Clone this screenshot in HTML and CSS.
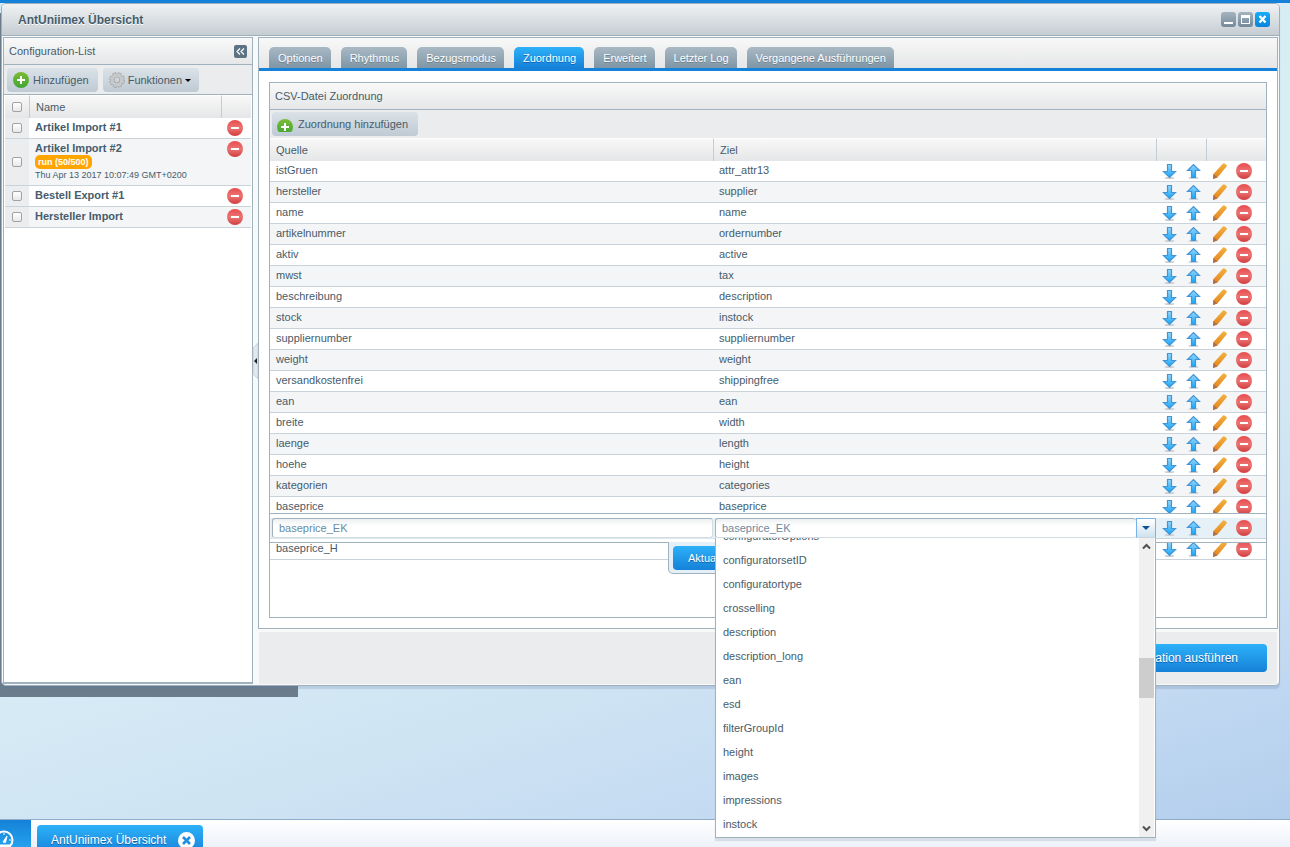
FILE: index.html
```html
<!DOCTYPE html>
<html lang="de">
<head>
<meta charset="utf-8">
<title>AntUniimex Übersicht</title>
<link rel="stylesheet" href="styles.css">
</head>
<body>
<svg class="defs" aria-hidden="true">
  <defs>
    <linearGradient id="gRed" x1="0" y1="0" x2="0" y2="1"><stop offset="0" stop-color="#ea4a4d"/><stop offset=".5" stop-color="#ea7573"/><stop offset="1" stop-color="#d23c3f"/></linearGradient>
    <linearGradient id="gGreen" x1="0" y1="0" x2="0" y2="1"><stop offset="0" stop-color="#7dbb35"/><stop offset="1" stop-color="#3fa535"/></linearGradient>
    <linearGradient id="gBlue" x1="0" y1="0" x2="0" y2="1"><stop offset="0" stop-color="#9ad6f8"/><stop offset="1" stop-color="#12a6fb"/></linearGradient>
    <linearGradient id="gPen" x1="0" y1="0" x2="0" y2="1"><stop offset="0" stop-color="#f2b340"/><stop offset="1" stop-color="#e3821f"/></linearGradient>
    <symbol id="minus" viewBox="0 0 16 16"><circle cx="8" cy="8" r="8" fill="url(#gRed)"/><rect x="4" y="7" width="8" height="2" fill="#fff"/></symbol>
    <symbol id="plus" viewBox="0 0 16 16"><circle cx="8" cy="8" r="8" fill="url(#gGreen)"/><path d="M7 4h2v3h3v2H9v3H7V9H4V7h3z" fill="#fff"/></symbol>
    <symbol id="down" viewBox="0 0 16 16"><ellipse cx="8.500" cy="15" rx="5" ry="1" fill="#c9ced3"/><path d="M6.500 1.500h4v7h4L8.500 14.500 2.500 8.500h4z" fill="url(#gBlue)" stroke="#4395d6" stroke-width="1.200"/></symbol>
    <symbol id="up" viewBox="0 0 16 16"><ellipse cx="8.500" cy="15" rx="5" ry="1" fill="#c9ced3"/><path d="M6.500 14.500h4v-7h4L8.500 1.500 2.500 7.500h4z" fill="url(#gBlue)" stroke="#4395d6" stroke-width="1.200"/></symbol>
    <symbol id="pen" viewBox="0 0 16 16"><path d="M1 16l.4-5L10.800.7q1-1 2.200 0l1.400 1.200q.9.900 0 1.900L5.400 14.400z" fill="url(#gPen)"/><path d="M1 16l.4-5 4 3.400z" fill="#a8704f"/></symbol>
    <symbol id="gear" viewBox="0 0 16 16"><g fill="none"><circle cx="8" cy="8" r="6.400" stroke="#a2a4a6" stroke-width="3" stroke-dasharray="3.400 1.626"/><circle cx="8" cy="8" r="4.600" stroke="#a2a4a6" stroke-width="4.400"/><circle cx="8" cy="8" r="6.200" stroke="#cbccce" stroke-width="2" stroke-dasharray="2.400 2.470" stroke-dashoffset="-.5"/><circle cx="8" cy="8" r="4.700" stroke="#c6c8ca" stroke-width="3.200"/></g></symbol>
  </defs>
</svg>
<div class="desktop">
  <div class="backwindow"></div>
  <section class="window">
    <header class="titlebar">
      <h1>AntUniimex Übersicht</h1>
      <div class="tools">
        <button class="tool" aria-label="Minimieren"><svg viewBox="0 0 15 15"><path d="M3 10h9v2H3z" fill="#fff"/></svg></button>
        <button class="tool" aria-label="Maximieren"><svg viewBox="0 0 15 15"><path d="M3 3h9v9H3zM4 6v5h7V6z" fill="#fff" fill-rule="evenodd"/></svg></button>
        <button class="tool close" aria-label="Schließen"><svg viewBox="0 0 15 15"><path d="M4.500 4l6 6.500M10.500 4l-6 6.500" stroke="#fff" stroke-width="2.400"/></svg></button>
      </div>
    </header>
    <div class="content">
      <aside class="sidebar">
        <div class="panelhead"><span>Configuration-List</span>
          <button class="collapse" aria-label="Einklappen"><svg viewBox="0 0 13 13"><path d="M6 3.500l-3 3 3 3M10 3.500l-3 3 3 3" fill="none" stroke="#fff" stroke-width="1.200"/></svg></button></div>
        <div class="toolbar">
          <button class="btn"><svg class="ic"><use href="#plus"/></svg>Hinzufügen</button>
          <button class="btn menu"><svg class="ic"><use href="#gear"/></svg>Funktionen<i class="caret"></i></button>
        </div>
        <table class="configs">
          <colgroup><col class="ccheck"><col><col class="cdel"></colgroup>
          <thead><tr><th><input type="checkbox" aria-label="Alle auswählen"></th><th>Name</th><th></th></tr></thead>
          <tbody>
            <tr><td><input type="checkbox" aria-label="Artikel Import #1"></td><td><b>Artikel Import #1</b></td><td><button class="icon" aria-label="Löschen"><svg class="ic"><use href="#minus"/></svg></button></td></tr>
            <tr><td><input type="checkbox" aria-label="Artikel Import #2"></td><td><b>Artikel Import #2</b><span class="badge">run (50/500)</span><small>Thu Apr 13 2017 10:07:49 GMT+0200</small></td><td><button class="icon" aria-label="Löschen"><svg class="ic"><use href="#minus"/></svg></button></td></tr>
            <tr><td><input type="checkbox" aria-label="Bestell Export #1"></td><td><b>Bestell Export #1</b></td><td><button class="icon" aria-label="Löschen"><svg class="ic"><use href="#minus"/></svg></button></td></tr>
            <tr><td><input type="checkbox" aria-label="Hersteller Import"></td><td><b>Hersteller Import</b></td><td><button class="icon" aria-label="Löschen"><svg class="ic"><use href="#minus"/></svg></button></td></tr>
          </tbody>
        </table>
      </aside>
      <div class="splitter"><svg viewBox="0 0 5 36"><path d="M5 0L0 5v26l5 5z" fill="#e4e6e8" stroke="#b9c3ca" stroke-width=".6"/><path d="M4 15v6L1 18z" fill="#222"/></svg></div>
      <main class="main">
        <div class="tabpanel">
          <nav class="tabs">
            <button>Optionen</button><button>Rhythmus</button><button>Bezugsmodus</button><button class="active">Zuordnung</button><button>Erweitert</button><button>Letzter Log</button><button>Vergangene Ausführungen</button>
          </nav>
          <div class="tabbody">
            <section class="gridpanel">
              <div class="panelhead"><span>CSV-Datei Zuordnung</span></div>
              <div class="toolbar"><button class="btn low"><svg class="ic" viewBox="0 0 16 13"><use href="#plus" width="16" height="16"/></svg>Zuordnung hinzufügen</button></div>
              <table class="mapping">
                <colgroup><col><col><col class="cmove"><col class="cedit"></colgroup>
                <thead><tr><th>Quelle</th><th>Ziel</th><th></th><th></th></tr></thead>
                <tbody id="rows"></tbody>
              </table>
            </section>
          </div>
        </div>
        <footer class="actions"><button class="primary big">Konfiguration ausführen</button></footer>
      </main>
    </div>
  </section>
  <div class="taskbar">
    <button class="start" aria-label="Dashboard"><svg viewBox="0 0 20 20"><circle cx="10" cy="10" r="8.500" fill="none" stroke="#fff" stroke-width="2"/><path d="M9 12l4-6-1.500 6.500z" fill="#fff" stroke="#fff"/><path d="M3 10h2M15 10h2M10 3v2M5 5l1 1M4 15h12v3H4z" stroke="#fff" fill="#fff"/></svg></button>
    <button class="task">AntUniimex Übersicht<svg viewBox="0 0 17 17"><circle cx="8.500" cy="8.500" r="8.500" fill="#fff"/><path d="M5 5l7 7M12 5l-7 7" stroke="#1e8fe3" stroke-width="2.600"/></svg></button>
  </div>
</div>
<script src="app.js"></script>
</body>
</html>
```

FILE: app.js
```js
const mapping = [
  ['istGruen', 'attr_attr13'], ['hersteller', 'supplier'], ['name', 'name'],
  ['artikelnummer', 'ordernumber'], ['aktiv', 'active'], ['mwst', 'tax'],
  ['beschreibung', 'description'], ['stock', 'instock'], ['suppliernumber', 'suppliernumber'],
  ['weight', 'weight'], ['versandkostenfrei', 'shippingfree'], ['ean', 'ean'],
  ['breite', 'width'], ['laenge', 'length'], ['hoehe', 'height'],
  ['kategorien', 'categories'], ['baseprice', 'baseprice'],
  ['baseprice_EK', 'baseprice_EK', true], ['baseprice_H', '']
];
const options = ['configuratorOptions', 'configuratorsetID', 'configuratortype', 'crosselling',
  'description', 'description_long', 'ean', 'esd', 'filterGroupId', 'height', 'images',
  'impressions', 'instock'];

const icon = (id, label) =>
  `<button class="icon" aria-label="${label}"><svg class="ic"><use href="#${id}"/></svg></button>`;

const dropdown = `<div class="dropdown">
  <ul role="listbox">${options.map(o => `<li role="option">${o}</li>`).join('')}</ul>
  <div class="scroll">
    <svg viewBox="0 0 15 17"><path d="M4 10.500l3.500-3.500 3.500 3.500" fill="none" stroke="#505050" stroke-width="2"/></svg>
    <i class="thumb"></i>
    <svg viewBox="0 0 15 17"><path d="M4 6.500l3.500 3.500 3.500-3.500" fill="none" stroke="#505050" stroke-width="2"/></svg>
  </div></div>`;

document.getElementById('rows').innerHTML = mapping.map(([source, target, editing]) => {
  const first = editing
    ? `<div class="frame"></div><div class="update"><button class="primary">Aktualisieren</button></div>
       <input class="field" type="text" aria-label="Quelle" value="${source}">`
    : source;
  const second = editing
    ? `<div class="combo"><input class="field" type="text" aria-label="Ziel" value="${target}"><button class="trigger" aria-label="Auswahl öffnen"><i class="caret"></i></button>${dropdown}</div>`
    : target;
  return `<tr${editing ? ' class="editing"' : ''}><td>${first}</td><td>${second}</td>
    <td><div class="icons">${icon('down', 'Nach unten')}${icon('up', 'Nach oben')}</div></td>
    <td><div class="icons">${icon('pen', 'Bearbeiten')}${icon('minus', 'Löschen')}</div></td></tr>`;
}).join('');
```

FILE: styles.css
```css
* { box-sizing: border-box; }
body {
  margin: 0;
  font: 11px/14px "Liberation Sans", Arial, sans-serif;
  color: #475c6a;
}
button, input { font: inherit; color: inherit; margin: 0; padding: 0; border: 0; }
button { background: none; white-space: nowrap; }
svg { display: block; }
.defs { position: absolute; width: 0; height: 0; }
.ic { width: 16px; height: 16px; flex: none; }

.desktop {
  position: relative;
  height: 100vh;
  overflow: hidden;
  display: flex;
  flex-direction: column;
  justify-content: flex-end;
  border-top: 3px solid #1581d8;
  background: linear-gradient(163deg, #d3ecf4 0%, #d8eef5 50%, #d0e5f3 68%, #c5dbf2 82%, #b0ccec 100%);
}
.backwindow {
  position: absolute;
  left: 0;
  top: 10px;
  bottom: 150px;
  width: 298px;
  background: #6b7d8c;
}

/* Window */
.window {
  position: absolute;
  z-index: 2;
  inset: 0 10px 161px 1px;
  display: flex;
  flex-direction: column;
  border: 1px solid #9fb0bc;
  border-radius: 5px;
  background: #f8fafa;
  box-shadow: 0 3px 1px rgba(90, 120, 160, .22);
}
.titlebar {
  flex: none;
  height: 32px;
  display: flex;
  align-items: center;
  justify-content: space-between;
  padding: 0 9px 0 16px;
  border-bottom: 1px solid #9fb0bc;
  border-radius: 4px 4px 0 0;
  background: linear-gradient(#f0f2f3, #c5cdd3);
}
.titlebar h1 { margin: 0; font-size: 12px; text-shadow: 0 1px #fff; }
.tools { display: flex; gap: 2px; }
.tool { width: 15px; height: 15px; border-radius: 3px; background: linear-gradient(#a5b4bf, #75899a); }
.tool.close { background: linear-gradient(#16adfb, #0883dc); }
.content { flex: 1; min-height: 0; display: flex; padding: 1px; }

/* Shared panel parts */
.panelhead {
  display: flex;
  align-items: center;
  justify-content: space-between;
  height: 27px;
  padding: 0 5px;
  border-bottom: 1px solid #9fb2be;
  background: linear-gradient(#f9f9f9, #e5e7e8);
}
.collapse { width: 13px; height: 13px; border-radius: 2px; background: #5d7382; }
.toolbar { display: flex; gap: 5px; height: 30px; padding: 3px; background: #ebeced; }
.btn {
  display: flex;
  align-items: center;
  gap: 4px;
  height: 24px;
  padding: 0 9px 0 6px;
  border-radius: 4px;
  background: linear-gradient(#dbe2e8, #bfcad4);
}
.btn.menu { gap: 3px; padding-right: 8px; }
.btn.low { padding: 0 10px 0 5px; gap: 5px; }
.btn.low .ic { align-self: flex-end; height: 13px; margin-bottom: 4px; overflow: hidden; }
.caret { width: 0; height: 0; border: 3px solid transparent; border-top-color: #000; border-bottom: 0; }

table { width: 100%; border-collapse: separate; border-spacing: 0; table-layout: fixed; }
th, td { padding: 0 6px; text-align: left; font-weight: normal; overflow: visible; }
th {
  height: 23px;
  border-top: 1px solid #fff;
  border-left: 1px solid #c3ccd2;
  background: linear-gradient(#f8f8f8, #e5e6e7);
}
th:first-child { border-left: 0; }
td { height: 21px; vertical-align: top; border-bottom: 1px solid #c9d3d9; }
tbody tr { background: #fff; }
tbody tr:nth-child(even) { background: #f3f5f7; }
.icon { display: block; width: 16px; height: 16px; }

/* Sidebar */
.sidebar { flex: none; width: 250px; border: 1px solid #9fb2be; border-bottom-width: 2px; background: #fff; }
.sidebar .toolbar { border-bottom: 1px solid #9fb2be; }
.ccheck { width: 24px; }
.cdel { width: 30px; }
.configs { padding: 0 1px; }
.configs td:first-child, .configs th:first-child { padding: 0; vertical-align: middle; }
.configs td:first-child { background: #ecedee; }
.configs td:nth-child(2) { padding: 2px 0 4px 6px; }
.configs td:nth-child(3) { padding: 2px 6px 0; }
.configs input {
  appearance: none;
  display: block;
  width: 10px;
  height: 10px;
  margin: 0 auto 0 7px;
  border: 1px solid #9da3a7;
  border-radius: 2px;
  background: linear-gradient(#fff, #e8e8e8);
}
.configs b { display: block; }
.badge {
  display: block;
  width: fit-content;
  padding: 0 3px;
  border-radius: 5px;
  background: #ffa500;
  color: #fff;
  font-size: 9px;
  font-weight: bold;
}
.configs small { display: block; font-size: 9px; line-height: 12px; }
.splitter { flex: none; width: 5px; display: flex; align-items: center; }
.splitter svg { width: 5px; height: 36px; }

/* Tab area */
.main { flex: 1; min-width: 0; display: flex; flex-direction: column; gap: 3px; }
.tabpanel { flex: 1; min-height: 0; display: flex; flex-direction: column; border: 1px solid #9fb2be; background: #fff; }
.tabs {
  flex: none;
  display: flex;
  align-items: flex-end;
  gap: 10px;
  height: 33px;
  padding: 0 10px;
  border-bottom: 3px solid #1581d8;
  background: linear-gradient(#f8f8f8, #e5e6e7);
}
.tabs button {
  height: 21px;
  padding: 0 8px 0 9px;
  border-radius: 5px 5px 0 0;
  background: linear-gradient(#a9b9c4, #7f96a5);
  color: #fff;
  text-shadow: 0 1px #6b8090;
}
.tabs .active { background: linear-gradient(#2db1f9, #1581d8); text-shadow: 0 1px #0b5fc0; }
.tabbody { flex: 1; min-height: 0; display: flex; padding: 11px 10px 10px; }
.gridpanel { flex: 1; min-width: 0; border: 1px solid #9fb2be; }
.gridpanel .toolbar { height: 28px; padding: 2px; }

/* Mapping table */
.cmove { width: 50px; }
.cedit { width: 60px; }
.mapping td:nth-child(-n+2) { padding-top: 2px; }
.mapping td:nth-child(3) { padding: 2px 0 0 5px; }
.mapping td:nth-child(4) { padding: 2px 0 0 6px; }
.icons { display: flex; gap: 8px; }

/* Inline row editor */
.mapping .editing { position: relative; background: #e5f0f7; }
.mapping .editing td:nth-child(-n+2) { padding: 0 0 0 2px; border-bottom-color: #dbe8f2; }
.frame {
  position: absolute;
  z-index: 1;
  inset: -5px 0 -4px;
  border: solid #9fb2be;
  border-width: 1px 0;
  box-shadow: inset 0 4px #fff, inset 0 -3px #fff;
  pointer-events: none;
}
.field {
  display: block;
  width: 100%;
  min-width: 0;
  height: 20px;
  padding: 0 6px;
  border: 1px solid #c9d3d9;
  border-color: #9fb2be #d5dce0 #d5dce0 #9fb2be;
  border-radius: 3px;
  background: linear-gradient(#eef0f1, #fff 7px);
  color: #6a8ba3;
}
.combo { position: relative; z-index: 3; display: flex; }
.combo .field { border-right: 0; }
.trigger {
  flex: none;
  width: 20px;
  display: flex;
  align-items: center;
  justify-content: center;
  border: 1px solid #78b2e6;
  border-bottom-color: #c4d5e0;
  background: linear-gradient(#fff, #cfe2ef);
}
.trigger .caret { border-width: 4px 4px 0; border-top-color: #0d5296; }
.update {
  position: absolute;
  z-index: 2;
  top: 24px;
  left: 50%;
  width: 200px;
  margin-left: -100px;
  padding: 4px 4px 3px;
  border: 1px solid #9fb2be;
  border-top: 0;
  border-radius: 0 0 5px 5px;
  background: #e5eff8;
}
.primary {
  display: block;
  height: 24px;
  padding: 0 15px;
  border-radius: 4px;
  background: linear-gradient(#2db1f9, #1581d8);
  color: #fff;
  text-shadow: 0 1px #0f62b0;
}
.primary.big { height: 28px; padding: 0 29px; font-size: 12px; }
.dropdown {
  position: absolute;
  top: 20px;
  left: 0;
  right: 0;
  height: 300px;
  display: flex;
  border: 1px solid #9fb2be;
  border-top: 0;
  background: #fff;
  box-shadow: 0 3px 1px rgba(110, 130, 150, .2);
}
.dropdown ul {
  flex: 1;
  min-width: 0;
  margin: 0;
  padding: 0 0 1px;
  list-style: none;
  overflow: hidden;
  display: flex;
  flex-direction: column;
  justify-content: flex-end;
}
.dropdown li { flex: none; padding: 0 7px; line-height: 24px; }
.scroll { flex: none; width: 16px; display: flex; flex-direction: column; border-right: 1px solid #fff; background: #f0f0f0; }
.scroll svg { flex: none; height: 17px; }
.thumb { height: 40px; margin: 103px 0 auto; background: #cdcdcd; }

/* Bottom bars */
.actions {
  flex: none;
  display: flex;
  align-items: center;
  justify-content: flex-end;
  height: 52px;
  margin: 0 1px;
  padding: 0 10px;
  background: #ebeced;
}
.taskbar {
  position: relative;
  z-index: 1;
  flex: none;
  display: flex;
  align-items: flex-start;
  gap: 6px;
  height: 28px;
  overflow: hidden;
  border-top: 1px solid #8fadca;
  background: linear-gradient(#fff, #edf2fa);
}
.start { flex: none; width: 31px; height: 40px; padding: 0; background: linear-gradient(#1581d8, #2db1f9); overflow: hidden; display: flex; align-items: center; }
.start svg { flex: none; width: 20px; height: 20px; margin-left: -6px; }
.task {
  display: flex;
  align-items: center;
  gap: 12px;
  height: 30px;
  margin-top: 5px;
  padding: 0 8px 0 14px;
  border-radius: 4px 4px 0 0;
  background: linear-gradient(#2db1f9, #1581d8);
  color: #fff;
  font-size: 12px;
  text-shadow: 0 1px #0f62b0;
}
.task svg { width: 17px; height: 17px; }
```
